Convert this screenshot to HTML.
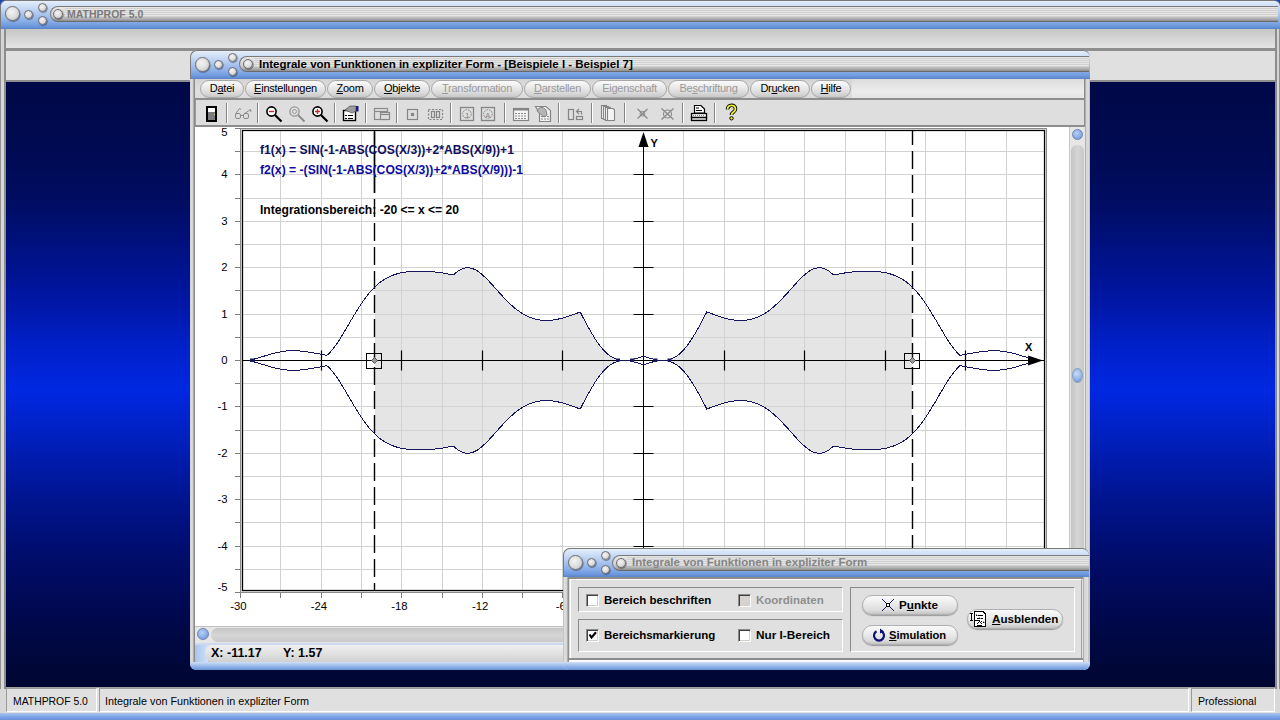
<!DOCTYPE html>
<html><head><meta charset="utf-8">
<style>
*{margin:0;padding:0;box-sizing:border-box}
html,body{width:1280px;height:720px;overflow:hidden;background:#e0e0e0;font-family:"Liberation Sans",sans-serif;font-size:12px;color:#000}
.a{position:absolute}
.tb{position:absolute;border-top:1px solid #7a7a7a;border-left:1px solid #7a7a7a;background:linear-gradient(#e6eefa 0%,#d6e4f8 12%,#b4ccf0 40%,#8cb0e8 70%,#6c98de 90%,#5a82c6 100%)}
.circ{position:absolute;border-radius:50%;background:radial-gradient(circle at 42% 38%,#f4f4f4 0%,#e0e0e0 45%,#cfcfcf 75%,#b8b8b8 100%);border:1px solid #6e6e6e;box-shadow:0.6px 0.8px 0.8px rgba(30,30,50,.55)}
.pill{position:absolute;border-radius:8px 0 0 8px;background:linear-gradient(#e8e8e8 0,#dedede 25%,#d4d4d4 55%,#b8b8b8 80%,#8e8e8e 100%);border:1px solid #7a7a7a;border-bottom-color:#6a6a6a}
.pill:after{content:"";position:absolute;left:14px;right:0;top:1px;bottom:4px;background:repeating-linear-gradient(#d0d0d0 0,#d0d0d0 1px,#e6e6e6 1px,#e6e6e6 2px)}
.mbtn{position:absolute;height:18px;border-radius:9px;border:1px solid #a8a8a8;background:linear-gradient(#fafafa,#ececec 35%,#dcdcdc 70%,#c8c8c8);font-size:11px;letter-spacing:-0.25px;line-height:15px;text-align:center;color:#000}
.mbtn.dis{color:#9a9a9a}
u{text-decoration:underline;text-underline-offset:1px}
.btn{border-radius:10px;border:1px solid #b0b0b0;background:linear-gradient(#fafafa,#ececec 40%,#dcdcdc 80%,#c4c4c4);box-shadow:0 1px 1px #9a9a9a}
</style></head>
<body>
<!-- main background -->
<div class="a" style="left:0;top:0;width:1280px;height:720px;background:#d8d8d8"></div>
<!-- blue desktop area -->
<div class="a" style="left:6px;top:82px;width:1269px;height:605px;background:linear-gradient(#000848 0.0%,#000a4e 8.1%,#000c60 19.5%,#0016a4 36.0%,#0020c8 43.5%,#0028e2 50.9%,#001fbc 59.2%,#00148e 69.1%,#000c68 79.0%,#000846 90.7%,#000630 100.0%)"></div>

<!-- main title bar -->
<div class="a" style="left:0;top:0;width:8px;height:8px;background:#1848b0"></div><div class="a" style="left:1272px;top:0;width:8px;height:8px;background:#1848b0"></div>
<div class="tb" style="left:0;top:0;width:1280px;height:29px;border-radius:6px 6px 0 0"></div>
<div class="circ" style="left:5px;top:6px;width:15px;height:15px"></div>
<div class="circ" style="left:24px;top:10px;width:9px;height:9px"></div>
<div class="circ" style="left:38px;top:3px;width:9px;height:9px"></div>
<div class="circ" style="left:38px;top:16px;width:9px;height:9px"></div>
<div class="pill" style="left:50px;top:6px;width:1228px;height:16px;border-radius:8px 0 0 8px;border-right:none"></div>
<div class="circ" style="left:53px;top:9px;width:10px;height:10px"></div>
<div class="a" style="left:67px;top:7px;font-weight:bold;font-size:10.5px;color:#7a7a7a;line-height:14px">MATHPROF 5.0</div>

<!-- main toolbars -->
<div class="a" style="left:0;top:29px;width:1280px;height:53px;background:#d4d4d4"></div>
<div class="a" style="left:0;top:29px;width:1px;height:660px;background:#909090"></div>
<div class="a" style="left:4px;top:29px;width:2px;height:660px;background:#8c8c8c"></div>
<div class="a" style="left:6px;top:29px;width:1269px;height:20px;background:linear-gradient(#c6c6c6,#e6e6e6)"></div>
<div class="a" style="left:6px;top:48px;width:1269px;height:3px;background:#8e8e8e"></div>
<div class="a" style="left:6px;top:51px;width:1269px;height:30px;background:#e0e0e0"></div>
<div class="a" style="left:6px;top:80px;width:1269px;height:2px;background:#8e8e8e"></div>
<div class="a" style="left:1275px;top:29px;width:2px;height:660px;background:#8c8c8c"></div>
<div class="a" style="left:1279px;top:29px;width:1px;height:660px;background:#909090"></div>

<!-- status bar -->
<div class="a" style="left:6px;top:687px;width:1269px;height:26px;background:#e0e0e0;border-top:1px solid #a0a0a0"></div>
<div class="a" style="left:0;top:713px;width:1280px;height:7px;background:linear-gradient(#aac4ec,#7aa2e4 60%,#6690d8)"></div>

<!-- ================= CHILD WINDOW ================= -->
<div class="a" style="left:190px;top:50px;width:900px;height:620px;background:#d6d6d6;border-radius:7px 7px 7px 7px"></div>
<div class="tb" style="left:190px;top:50px;width:900px;height:29px;border-radius:7px 7px 0 0"></div>
<div class="circ" style="left:195px;top:57px;width:15px;height:15px"></div>
<div class="circ" style="left:214px;top:60px;width:9px;height:9px"></div>
<div class="circ" style="left:228px;top:53px;width:9px;height:9px"></div>
<div class="circ" style="left:228px;top:67px;width:9px;height:9px"></div>
<div class="pill" style="left:239px;top:56px;width:850px;height:16px;border-radius:8px 0 0 8px;border-right:none"></div>
<div class="circ" style="left:243px;top:59px;width:10px;height:10px"></div>
<div class="a" style="left:259px;top:57px;font-weight:bold;font-size:11.5px;color:#000;line-height:14px">Integrale von Funktionen in expliziter Form - [Beispiele I - Beispiel 7]</div>
<!-- frame sides -->
<div class="a" style="left:190px;top:79px;width:5px;height:584px;background:linear-gradient(90deg,#c8c8c8 0,#dedede 1px,#d0d0d0 3px,#8a8a8a 4px,#8a8a8a 5px)"></div>
<div class="a" style="left:1084px;top:79px;width:6px;height:584px;background:linear-gradient(90deg,#8c8c8c 0,#8c8c8c 1px,#d4d4d4 2px,#dcdcdc 5px,#a0a0a0 6px)"></div>
<!-- menubar -->
<div class="a" style="left:195px;top:79px;width:889px;height:20px;background:linear-gradient(#dcdcdc,#ececec 60%,#e4e4e4)"></div>
<div class="a" style="left:195px;top:79px;width:657px;height:20px;background:linear-gradient(#d4d4d4,#e0e0e0 60%,#dadada)"></div>
<div class="mbtn" style="left:200px;top:80px;width:44px"><span>D<u>a</u>tei</span></div>
<div class="mbtn" style="left:245px;top:80px;width:81px"><u>E</u>instellungen</div>
<div class="mbtn" style="left:327px;top:80px;width:46px"><u>Z</u>oom</div>
<div class="mbtn" style="left:374px;top:80px;width:56px"><u>O</u>bjekte</div>
<div class="mbtn dis" style="left:431px;top:80px;width:92px"><u>T</u>ransformation</div>
<div class="mbtn dis" style="left:524px;top:80px;width:67px"><u>D</u>arstellen</div>
<div class="mbtn dis" style="left:592px;top:80px;width:75px">Ei<u>g</u>enschaft</div>
<div class="mbtn dis" style="left:668px;top:80px;width:81px">Be<u>s</u>chriftung</div>
<div class="mbtn" style="left:750px;top:80px;width:60px">Dr<u>u</u>cken</div>
<div class="mbtn" style="left:811px;top:80px;width:40px"><u>H</u>ilfe</div>
<!-- toolbar -->
<div class="a" style="left:195px;top:98px;width:889px;height:2px;background:#8e8e8e"></div>
<div class="a" style="left:195px;top:100px;width:889px;height:26px;background:#dedede;border-left:1px solid #9a9a9a"></div>
<div class="a" style="left:195px;top:125px;width:889px;height:2px;background:#8e8e8e"></div>
<svg class="a" style="left:196px;top:100px" width="888" height="26" viewBox="196 100 888 26">
<g stroke="#858585" stroke-width="1"><path d="M226.5 103V123M257.5 103V123M334.5 103V123M365.5 103V123M396.5 103V123M450.5 103V123M504.5 103V123M558.5 103V123M591.5 103V123M624.5 103V123M682.5 103V123M714.5 103V123"/></g>
<g stroke="#fff" stroke-width="1"><path d="M227.5 103V123M258.5 103V123M335.5 103V123M366.5 103V123M397.5 103V123M451.5 103V123M505.5 103V123M559.5 103V123M592.5 103V123M625.5 103V123M683.5 103V123M715.5 103V123"/></g>
<!-- door -->
<rect x="207" y="107" width="9" height="14" fill="#7c7c7c" stroke="#000" stroke-width="2"/>
<rect x="208" y="108" width="7" height="4" fill="#fff"/>
<rect x="214" y="114" width="1" height="1" fill="#e8e060"/>
<!-- glasses -->
<g fill="none" stroke="#8a8a8a" stroke-width="1"><rect x="235.5" y="113.5" width="5" height="5" rx="1.5"/><rect x="243.5" y="113.5" width="5" height="5" rx="1.5"/><path d="M240.5 115.5H243.5M235.5 114L239.5 108.5L241 109.5M244 114L250.5 109.5L251 112"/></g>
<!-- zoom out -->
<circle cx="271.5" cy="111.5" r="4.6" fill="#fff" stroke="#000" stroke-width="1.6"/>
<path d="M269 111.5H274" stroke="#d02030" stroke-width="1.4"/>
<path d="M275 115L281.5 121.5" stroke="#000" stroke-width="2.2"/>
<!-- zoom gray -->
<circle cx="294.5" cy="111.5" r="4.6" fill="none" stroke="#9a9a9a" stroke-width="1.4"/>
<circle cx="294.5" cy="111.5" r="2" fill="none" stroke="#9a9a9a" stroke-width="1"/>
<path d="M298 115L304.5 121.5" stroke="#8a8a8a" stroke-width="1.8"/>
<!-- zoom in -->
<circle cx="317.5" cy="111.5" r="4.6" fill="#fff" stroke="#000" stroke-width="1.6"/>
<path d="M315 111.5H320M317.5 109V114" stroke="#d02030" stroke-width="1.4"/>
<path d="M321 115L327.5 121.5" stroke="#000" stroke-width="2.2"/>
<!-- properties -->
<rect x="343.5" y="110.5" width="12" height="10" fill="#fff" stroke="#000" stroke-width="1.4"/>
<path d="M345 115.5H347M348 115.5H353M345 118.5H347M348 118.5H353" stroke="#000" stroke-width="1"/>
<path d="M345 110L350 106H356V111L352 113Z" fill="#9c9c9c" stroke="#555" stroke-width="0.8"/>
<rect x="356" y="106" width="2.5" height="5.5" fill="#1a1a80"/>
<!-- windows gray -->
<g fill="none" stroke="#8a8a8a" stroke-width="1.2"><rect x="374.5" y="108.5" width="13" height="11"/><path d="M374.5 111.5H387.5"/><rect x="380.5" y="112.5" width="9" height="7" fill="#dedede"/><path d="M380.5 114.5H389.5"/></g>
<!-- square dot -->
<g fill="none" stroke="#858585" stroke-width="1.2"><rect x="407.5" y="109.5" width="10" height="10"/><rect x="411.5" y="113.5" width="2" height="2"/>
<rect x="428.5" y="109.5" width="14" height="10" stroke-dasharray="2,1.5"/><rect x="431.5" y="111.5" width="3" height="6"/><rect x="436.5" y="111.5" width="3" height="6"/></g>
<!-- circle 1 / A -->
<g fill="none" stroke="#858585" stroke-width="1.3"><rect x="460.5" y="107.5" width="13" height="13"/><rect x="481.5" y="107.5" width="13" height="13"/>
<circle cx="467" cy="114" r="4.3" stroke-dasharray="1.6,1" stroke-width="1"/><circle cx="488" cy="114" r="4.3" stroke-dasharray="1.6,1" stroke-width="1"/></g>
<text x="465" y="117.5" font-family="Liberation Sans" font-size="8" fill="#858585">1</text>
<text x="485.3" y="117.5" font-family="Liberation Sans" font-size="7.5" fill="#858585">A</text>
<!-- table -->
<rect x="513.5" y="108.5" width="15" height="12" fill="#f4f4f4" stroke="#858585" stroke-width="1.2"/>
<rect x="513.5" y="108.5" width="15" height="2" fill="#858585"/>
<path d="M515 113.5H527M515 116H527M515 118.5H527" stroke="#8a8a8a" stroke-width="1" stroke-dasharray="2,1"/>
<!-- table hand -->
<path d="M535.5 106.5H546L550.5 110.5V121.5H539.5V113Z" fill="#f0f0f0" stroke="#858585" stroke-width="1.2"/>
<path d="M541 116.5H549M541 119H549" stroke="#8a8a8a" stroke-width="1" stroke-dasharray="2,1"/>
<path d="M537 111C538 107 543 106 546 110L547 115L544 117Z" fill="#b4b4b4" stroke="#858585" stroke-width="1"/>
<!-- columns arrow -->
<g fill="none" stroke="#858585" stroke-width="1.2"><rect x="568.5" y="109.5" width="5" height="10"/><rect x="576.5" y="116.5" width="6" height="3"/><path d="M581.5 114.5V111.5H577M579 109L576.5 111.5L579 114"/></g>
<!-- pages -->
<g fill="#f4f4f4" stroke="#858585" stroke-width="1.1"><rect x="601.5" y="105.5" width="5" height="13"/><rect x="603.5" y="106.5" width="5" height="13"/><rect x="605.5" y="107.5" width="5" height="13"/><path d="M607.5 108.5H613L614.5 110V120.5H607.5Z"/></g>
<!-- X icons -->
<g stroke="#8a8a8a" stroke-width="1.3" fill="none"><path d="M637.5 109L647.5 118.5M647.5 109L637.5 118.5"/><circle cx="642.5" cy="113.7" r="2.4" stroke-width="1"/>
<path d="M661.5 108.5L673.5 119.5M673.5 108.5L661.5 119.5"/><circle cx="667.5" cy="114" r="4" stroke-width="1.1"/></g>
<!-- printer -->
<path d="M694.5 105.5H701L704.5 109V113H694.5Z" fill="#fff" stroke="#000" stroke-width="1.2"/>
<path d="M696 108H699M696 110.5H702" stroke="#000" stroke-width="1"/>
<rect x="691.5" y="113.5" width="15" height="4" fill="#fff" stroke="#000" stroke-width="1.3"/>
<path d="M693 115.5H705" stroke="#777" stroke-width="1" stroke-dasharray="1,1"/>
<rect x="691.5" y="117.5" width="15" height="3" fill="#d8d8d8" stroke="#000" stroke-width="1.3"/>
<!-- help -->
<path d="M727.5 109.5C727.5 104 735.5 104 735.5 109C735.5 112 731.5 112 731.5 115" fill="none" stroke="#000" stroke-width="3.6"/>
<path d="M727.5 109.5C727.5 104 735.5 104 735.5 109C735.5 112 731.5 112 731.5 115" fill="none" stroke="#f0f020" stroke-width="1.8"/>
<circle cx="731.5" cy="118.3" r="1.7" fill="#f0f020" stroke="#000" stroke-width="1"/>
</svg>
<!-- plot white area -->
<div class="a" style="left:195px;top:127px;width:874px;height:500px;background:#fff"></div>
<svg class="a" style="left:196px;top:127px" width="873" height="500" viewBox="196 127 873 500">
<defs><clipPath id="pc"><rect x="243" y="131" width="801" height="459"/></clipPath></defs>
<path d="M374.8 287.0 L375.6 286.2 L376.5 285.4 L377.3 284.7 L378.1 284.0 L378.9 283.3 L379.7 282.7 L380.5 282.1 L381.4 281.5 L382.2 280.9 L383.0 280.3 L383.8 279.8 L384.6 279.3 L385.4 278.8 L386.2 278.3 L387.1 277.9 L387.9 277.4 L388.7 277.0 L389.5 276.6 L390.3 276.3 L391.1 275.9 L391.9 275.6 L392.8 275.3 L393.6 275.0 L394.4 274.7 L395.2 274.4 L396.0 274.1 L396.8 273.9 L397.7 273.7 L398.5 273.5 L399.3 273.2 L400.1 273.1 L400.9 272.9 L401.7 272.7 L402.5 272.5 L403.4 272.4 L404.2 272.3 L405.0 272.1 L405.8 272.0 L406.6 271.9 L407.4 271.8 L408.2 271.7 L409.1 271.6 L409.9 271.5 L410.7 271.5 L411.5 271.4 L412.3 271.3 L413.1 271.3 L414.0 271.3 L414.8 271.2 L415.6 271.2 L416.4 271.2 L417.2 271.1 L418.0 271.1 L418.8 271.1 L419.7 271.1 L420.5 271.1 L421.3 271.1 L422.1 271.1 L422.9 271.2 L423.7 271.2 L424.5 271.2 L425.4 271.2 L426.2 271.3 L427.0 271.3 L427.8 271.4 L428.6 271.4 L429.4 271.5 L430.3 271.5 L431.1 271.6 L431.9 271.7 L432.7 271.7 L433.5 271.8 L434.3 271.9 L435.1 272.0 L436.0 272.1 L436.8 272.2 L437.6 272.3 L438.4 272.4 L439.2 272.5 L440.0 272.6 L440.8 272.7 L441.7 272.9 L442.5 273.0 L443.3 273.1 L444.1 273.3 L444.9 273.4 L445.7 273.5 L446.5 273.7 L447.4 273.8 L448.2 274.0 L449.0 274.1 L449.8 274.3 L450.6 274.5 L451.4 274.6 L452.3 274.8 L453.1 274.9 L453.9 274.8 L454.7 273.9 L455.5 273.2 L456.3 272.5 L457.1 271.8 L458.0 271.2 L458.8 270.6 L459.6 270.1 L460.4 269.6 L461.2 269.2 L462.0 268.9 L462.8 268.5 L463.7 268.3 L464.5 268.1 L465.3 267.9 L466.1 267.8 L466.9 267.7 L467.7 267.7 L468.6 267.7 L469.4 267.8 L470.2 268.0 L471.0 268.1 L471.8 268.3 L472.6 268.6 L473.4 268.9 L474.3 269.3 L475.1 269.7 L475.9 270.1 L476.7 270.6 L477.5 271.1 L478.3 271.6 L479.1 272.2 L480.0 272.8 L480.8 273.5 L481.6 274.1 L482.4 274.8 L483.2 275.5 L484.0 276.3 L484.9 277.1 L485.7 277.9 L486.5 278.7 L487.3 279.5 L488.1 280.3 L488.9 281.2 L489.7 282.1 L490.6 282.9 L491.4 283.8 L492.2 284.7 L493.0 285.6 L493.8 286.6 L494.6 287.5 L495.4 288.4 L496.3 289.3 L497.1 290.2 L497.9 291.1 L498.7 292.0 L499.5 293.0 L500.3 293.9 L501.2 294.8 L502.0 295.6 L502.8 296.5 L503.6 297.4 L504.4 298.3 L505.2 299.1 L506.0 299.9 L506.9 300.8 L507.7 301.6 L508.5 302.4 L509.3 303.2 L510.1 303.9 L510.9 304.7 L511.7 305.4 L512.6 306.2 L513.4 306.9 L514.2 307.6 L515.0 308.2 L515.8 308.9 L516.6 309.5 L517.5 310.1 L518.3 310.7 L519.1 311.3 L519.9 311.9 L520.7 312.4 L521.5 313.0 L522.3 313.5 L523.2 314.0 L524.0 314.4 L524.8 314.9 L525.6 315.3 L526.4 315.7 L527.2 316.1 L528.0 316.5 L528.9 316.9 L529.7 317.2 L530.5 317.5 L531.3 317.8 L532.1 318.1 L532.9 318.4 L533.7 318.7 L534.6 318.9 L535.4 319.1 L536.2 319.3 L537.0 319.5 L537.8 319.7 L538.6 319.8 L539.5 319.9 L540.3 320.1 L541.1 320.2 L541.9 320.2 L542.7 320.3 L543.5 320.4 L544.3 320.4 L545.2 320.4 L546.0 320.5 L546.8 320.5 L547.6 320.4 L548.4 320.4 L549.2 320.4 L550.0 320.3 L550.9 320.2 L551.7 320.2 L552.5 320.1 L553.3 320.0 L554.1 319.9 L554.9 319.7 L555.8 319.6 L556.6 319.4 L557.4 319.3 L558.2 319.1 L559.0 318.9 L559.8 318.7 L560.6 318.5 L561.5 318.3 L562.3 318.1 L563.1 317.9 L563.9 317.7 L564.7 317.4 L565.5 317.2 L566.3 316.9 L567.2 316.7 L568.0 316.4 L568.8 316.1 L569.6 315.8 L570.4 315.6 L571.2 315.3 L572.1 315.0 L572.9 314.7 L573.7 314.4 L574.5 314.1 L575.3 313.8 L576.1 313.5 L576.9 313.2 L577.8 312.8 L578.6 312.5 L579.4 312.2 L580.2 311.9 L581.0 313.5 L581.8 315.0 L582.6 316.6 L583.5 318.2 L584.3 319.7 L585.1 321.3 L585.9 322.8 L586.7 324.3 L587.5 325.8 L588.4 327.3 L589.2 328.8 L590.0 330.2 L590.8 331.7 L591.6 333.1 L592.4 334.4 L593.2 335.8 L594.1 337.1 L594.9 338.4 L595.7 339.7 L596.5 340.9 L597.3 342.1 L598.1 343.3 L598.9 344.4 L599.8 345.5 L600.6 346.5 L601.4 347.6 L602.2 348.5 L603.0 349.5 L603.8 350.4 L604.7 351.2 L605.5 352.0 L606.3 352.8 L607.1 353.6 L607.9 354.3 L608.7 354.9 L609.5 355.5 L610.4 356.1 L611.2 356.6 L612.0 357.1 L612.8 357.6 L613.6 358.0 L614.4 358.4 L615.2 358.8 L616.1 359.1 L616.9 359.4 L617.7 359.6 L618.5 359.8 L619.3 360.0 L619.3 361.0 L618.5 361.2 L617.7 361.4 L616.9 361.6 L616.1 361.9 L615.2 362.2 L614.4 362.6 L613.6 363.0 L612.8 363.4 L612.0 363.9 L611.2 364.4 L610.4 364.9 L609.5 365.5 L608.7 366.1 L607.9 366.7 L607.1 367.4 L606.3 368.2 L605.5 369.0 L604.7 369.8 L603.8 370.6 L603.0 371.5 L602.2 372.5 L601.4 373.4 L600.6 374.5 L599.8 375.5 L598.9 376.6 L598.1 377.7 L597.3 378.9 L596.5 380.1 L595.7 381.3 L594.9 382.6 L594.1 383.9 L593.2 385.2 L592.4 386.6 L591.6 387.9 L590.8 389.3 L590.0 390.8 L589.2 392.2 L588.4 393.7 L587.5 395.2 L586.7 396.7 L585.9 398.2 L585.1 399.7 L584.3 401.3 L583.5 402.8 L582.6 404.4 L581.8 406.0 L581.0 407.5 L580.2 409.1 L579.4 408.8 L578.6 408.5 L577.8 408.2 L576.9 407.8 L576.1 407.5 L575.3 407.2 L574.5 406.9 L573.7 406.6 L572.9 406.3 L572.1 406.0 L571.2 405.7 L570.4 405.4 L569.6 405.2 L568.8 404.9 L568.0 404.6 L567.2 404.3 L566.3 404.1 L565.5 403.8 L564.7 403.6 L563.9 403.3 L563.1 403.1 L562.3 402.9 L561.5 402.7 L560.6 402.5 L559.8 402.3 L559.0 402.1 L558.2 401.9 L557.4 401.7 L556.6 401.6 L555.8 401.4 L554.9 401.3 L554.1 401.1 L553.3 401.0 L552.5 400.9 L551.7 400.8 L550.9 400.8 L550.0 400.7 L549.2 400.6 L548.4 400.6 L547.6 400.6 L546.8 400.5 L546.0 400.5 L545.2 400.6 L544.3 400.6 L543.5 400.6 L542.7 400.7 L541.9 400.8 L541.1 400.8 L540.3 400.9 L539.5 401.1 L538.6 401.2 L537.8 401.3 L537.0 401.5 L536.2 401.7 L535.4 401.9 L534.6 402.1 L533.7 402.3 L532.9 402.6 L532.1 402.9 L531.3 403.2 L530.5 403.5 L529.7 403.8 L528.9 404.1 L528.0 404.5 L527.2 404.9 L526.4 405.3 L525.6 405.7 L524.8 406.1 L524.0 406.6 L523.2 407.0 L522.3 407.5 L521.5 408.0 L520.7 408.6 L519.9 409.1 L519.1 409.7 L518.3 410.3 L517.5 410.9 L516.6 411.5 L515.8 412.1 L515.0 412.8 L514.2 413.4 L513.4 414.1 L512.6 414.8 L511.7 415.6 L510.9 416.3 L510.1 417.1 L509.3 417.8 L508.5 418.6 L507.7 419.4 L506.9 420.2 L506.0 421.1 L505.2 421.9 L504.4 422.7 L503.6 423.6 L502.8 424.5 L502.0 425.4 L501.2 426.2 L500.3 427.1 L499.5 428.0 L498.7 429.0 L497.9 429.9 L497.1 430.8 L496.3 431.7 L495.4 432.6 L494.6 433.5 L493.8 434.4 L493.0 435.4 L492.2 436.3 L491.4 437.2 L490.6 438.1 L489.7 438.9 L488.9 439.8 L488.1 440.7 L487.3 441.5 L486.5 442.3 L485.7 443.1 L484.9 443.9 L484.0 444.7 L483.2 445.5 L482.4 446.2 L481.6 446.9 L480.8 447.5 L480.0 448.2 L479.1 448.8 L478.3 449.4 L477.5 449.9 L476.7 450.4 L475.9 450.9 L475.1 451.3 L474.3 451.7 L473.4 452.1 L472.6 452.4 L471.8 452.7 L471.0 452.9 L470.2 453.0 L469.4 453.2 L468.6 453.3 L467.7 453.3 L466.9 453.3 L466.1 453.2 L465.3 453.1 L464.5 452.9 L463.7 452.7 L462.8 452.5 L462.0 452.1 L461.2 451.8 L460.4 451.4 L459.6 450.9 L458.8 450.4 L458.0 449.8 L457.1 449.2 L456.3 448.5 L455.5 447.8 L454.7 447.1 L453.9 446.2 L453.1 446.1 L452.3 446.2 L451.4 446.4 L450.6 446.5 L449.8 446.7 L449.0 446.9 L448.2 447.0 L447.4 447.2 L446.5 447.3 L445.7 447.5 L444.9 447.6 L444.1 447.7 L443.3 447.9 L442.5 448.0 L441.7 448.1 L440.8 448.3 L440.0 448.4 L439.2 448.5 L438.4 448.6 L437.6 448.7 L436.8 448.8 L436.0 448.9 L435.1 449.0 L434.3 449.1 L433.5 449.2 L432.7 449.3 L431.9 449.3 L431.1 449.4 L430.3 449.5 L429.4 449.5 L428.6 449.6 L427.8 449.6 L427.0 449.7 L426.2 449.7 L425.4 449.8 L424.5 449.8 L423.7 449.8 L422.9 449.8 L422.1 449.9 L421.3 449.9 L420.5 449.9 L419.7 449.9 L418.8 449.9 L418.0 449.9 L417.2 449.9 L416.4 449.8 L415.6 449.8 L414.8 449.8 L414.0 449.7 L413.1 449.7 L412.3 449.7 L411.5 449.6 L410.7 449.5 L409.9 449.5 L409.1 449.4 L408.2 449.3 L407.4 449.2 L406.6 449.1 L405.8 449.0 L405.0 448.9 L404.2 448.7 L403.4 448.6 L402.5 448.5 L401.7 448.3 L400.9 448.1 L400.1 447.9 L399.3 447.8 L398.5 447.5 L397.7 447.3 L396.8 447.1 L396.0 446.9 L395.2 446.6 L394.4 446.3 L393.6 446.0 L392.8 445.7 L391.9 445.4 L391.1 445.1 L390.3 444.7 L389.5 444.4 L388.7 444.0 L387.9 443.6 L387.1 443.1 L386.2 442.7 L385.4 442.2 L384.6 441.7 L383.8 441.2 L383.0 440.7 L382.2 440.1 L381.4 439.5 L380.5 438.9 L379.7 438.3 L378.9 437.7 L378.1 437.0 L377.3 436.3 L376.5 435.6 L375.6 434.8 L374.8 434.0Z M667.7 360.0 L668.5 359.8 L669.3 359.6 L670.1 359.4 L670.9 359.1 L671.8 358.8 L672.6 358.4 L673.4 358.0 L674.2 357.6 L675.0 357.1 L675.8 356.6 L676.6 356.1 L677.5 355.5 L678.3 354.9 L679.1 354.3 L679.9 353.6 L680.7 352.8 L681.5 352.0 L682.3 351.2 L683.2 350.4 L684.0 349.5 L684.8 348.5 L685.6 347.6 L686.4 346.5 L687.2 345.5 L688.1 344.4 L688.9 343.3 L689.7 342.1 L690.5 340.9 L691.3 339.7 L692.1 338.4 L692.9 337.1 L693.8 335.8 L694.6 334.4 L695.4 333.1 L696.2 331.7 L697.0 330.2 L697.8 328.8 L698.6 327.3 L699.5 325.8 L700.3 324.3 L701.1 322.8 L701.9 321.3 L702.7 319.7 L703.5 318.2 L704.4 316.6 L705.2 315.0 L706.0 313.5 L706.8 311.9 L707.6 312.2 L708.4 312.5 L709.2 312.8 L710.1 313.2 L710.9 313.5 L711.7 313.8 L712.5 314.1 L713.3 314.4 L714.1 314.7 L714.9 315.0 L715.8 315.3 L716.6 315.6 L717.4 315.8 L718.2 316.1 L719.0 316.4 L719.8 316.7 L720.7 316.9 L721.5 317.2 L722.3 317.4 L723.1 317.7 L723.9 317.9 L724.7 318.1 L725.5 318.3 L726.4 318.5 L727.2 318.7 L728.0 318.9 L728.8 319.1 L729.6 319.3 L730.4 319.4 L731.2 319.6 L732.1 319.7 L732.9 319.9 L733.7 320.0 L734.5 320.1 L735.3 320.2 L736.1 320.2 L737.0 320.3 L737.8 320.4 L738.6 320.4 L739.4 320.4 L740.2 320.5 L741.0 320.5 L741.8 320.4 L742.7 320.4 L743.5 320.4 L744.3 320.3 L745.1 320.2 L745.9 320.2 L746.7 320.1 L747.5 319.9 L748.4 319.8 L749.2 319.7 L750.0 319.5 L750.8 319.3 L751.6 319.1 L752.4 318.9 L753.3 318.7 L754.1 318.4 L754.9 318.1 L755.7 317.8 L756.5 317.5 L757.3 317.2 L758.1 316.9 L759.0 316.5 L759.8 316.1 L760.6 315.7 L761.4 315.3 L762.2 314.9 L763.0 314.4 L763.8 314.0 L764.7 313.5 L765.5 313.0 L766.3 312.4 L767.1 311.9 L767.9 311.3 L768.7 310.7 L769.5 310.1 L770.4 309.5 L771.2 308.9 L772.0 308.2 L772.8 307.6 L773.6 306.9 L774.4 306.2 L775.3 305.4 L776.1 304.7 L776.9 303.9 L777.7 303.2 L778.5 302.4 L779.3 301.6 L780.1 300.8 L781.0 299.9 L781.8 299.1 L782.6 298.3 L783.4 297.4 L784.2 296.5 L785.0 295.6 L785.8 294.8 L786.7 293.9 L787.5 293.0 L788.3 292.0 L789.1 291.1 L789.9 290.2 L790.7 289.3 L791.6 288.4 L792.4 287.5 L793.2 286.6 L794.0 285.6 L794.8 284.7 L795.6 283.8 L796.4 282.9 L797.3 282.1 L798.1 281.2 L798.9 280.3 L799.7 279.5 L800.5 278.7 L801.3 277.9 L802.1 277.1 L803.0 276.3 L803.8 275.5 L804.6 274.8 L805.4 274.1 L806.2 273.5 L807.0 272.8 L807.9 272.2 L808.7 271.6 L809.5 271.1 L810.3 270.6 L811.1 270.1 L811.9 269.7 L812.7 269.3 L813.6 268.9 L814.4 268.6 L815.2 268.3 L816.0 268.1 L816.8 268.0 L817.6 267.8 L818.4 267.7 L819.3 267.7 L820.1 267.7 L820.9 267.8 L821.7 267.9 L822.5 268.1 L823.3 268.3 L824.2 268.5 L825.0 268.9 L825.8 269.2 L826.6 269.6 L827.4 270.1 L828.2 270.6 L829.0 271.2 L829.9 271.8 L830.7 272.5 L831.5 273.2 L832.3 273.9 L833.1 274.8 L833.9 274.9 L834.7 274.8 L835.6 274.6 L836.4 274.5 L837.2 274.3 L838.0 274.1 L838.8 274.0 L839.6 273.8 L840.5 273.7 L841.3 273.5 L842.1 273.4 L842.9 273.3 L843.7 273.1 L844.5 273.0 L845.3 272.9 L846.2 272.7 L847.0 272.6 L847.8 272.5 L848.6 272.4 L849.4 272.3 L850.2 272.2 L851.0 272.1 L851.9 272.0 L852.7 271.9 L853.5 271.8 L854.3 271.7 L855.1 271.7 L855.9 271.6 L856.7 271.5 L857.6 271.5 L858.4 271.4 L859.2 271.4 L860.0 271.3 L860.8 271.3 L861.6 271.2 L862.5 271.2 L863.3 271.2 L864.1 271.2 L864.9 271.1 L865.7 271.1 L866.5 271.1 L867.3 271.1 L868.2 271.1 L869.0 271.1 L869.8 271.1 L870.6 271.2 L871.4 271.2 L872.2 271.2 L873.0 271.3 L873.9 271.3 L874.7 271.3 L875.5 271.4 L876.3 271.5 L877.1 271.5 L877.9 271.6 L878.8 271.7 L879.6 271.8 L880.4 271.9 L881.2 272.0 L882.0 272.1 L882.8 272.3 L883.6 272.4 L884.5 272.5 L885.3 272.7 L886.1 272.9 L886.9 273.1 L887.7 273.2 L888.5 273.5 L889.3 273.7 L890.2 273.9 L891.0 274.1 L891.8 274.4 L892.6 274.7 L893.4 275.0 L894.2 275.3 L895.1 275.6 L895.9 275.9 L896.7 276.3 L897.5 276.6 L898.3 277.0 L899.1 277.4 L899.9 277.9 L900.8 278.3 L901.6 278.8 L902.4 279.3 L903.2 279.8 L904.0 280.3 L904.8 280.9 L905.6 281.5 L906.5 282.1 L907.3 282.7 L908.1 283.3 L908.9 284.0 L909.7 284.7 L910.5 285.4 L911.4 286.2 L912.2 287.0 L912.2 434.0 L911.4 434.8 L910.5 435.6 L909.7 436.3 L908.9 437.0 L908.1 437.7 L907.3 438.3 L906.5 438.9 L905.6 439.5 L904.8 440.1 L904.0 440.7 L903.2 441.2 L902.4 441.7 L901.6 442.2 L900.8 442.7 L899.9 443.1 L899.1 443.6 L898.3 444.0 L897.5 444.4 L896.7 444.7 L895.9 445.1 L895.1 445.4 L894.2 445.7 L893.4 446.0 L892.6 446.3 L891.8 446.6 L891.0 446.9 L890.2 447.1 L889.3 447.3 L888.5 447.5 L887.7 447.8 L886.9 447.9 L886.1 448.1 L885.3 448.3 L884.5 448.5 L883.6 448.6 L882.8 448.7 L882.0 448.9 L881.2 449.0 L880.4 449.1 L879.6 449.2 L878.8 449.3 L877.9 449.4 L877.1 449.5 L876.3 449.5 L875.5 449.6 L874.7 449.7 L873.9 449.7 L873.0 449.7 L872.2 449.8 L871.4 449.8 L870.6 449.8 L869.8 449.9 L869.0 449.9 L868.2 449.9 L867.3 449.9 L866.5 449.9 L865.7 449.9 L864.9 449.9 L864.1 449.8 L863.3 449.8 L862.5 449.8 L861.6 449.8 L860.8 449.7 L860.0 449.7 L859.2 449.6 L858.4 449.6 L857.6 449.5 L856.7 449.5 L855.9 449.4 L855.1 449.3 L854.3 449.3 L853.5 449.2 L852.7 449.1 L851.9 449.0 L851.0 448.9 L850.2 448.8 L849.4 448.7 L848.6 448.6 L847.8 448.5 L847.0 448.4 L846.2 448.3 L845.3 448.1 L844.5 448.0 L843.7 447.9 L842.9 447.7 L842.1 447.6 L841.3 447.5 L840.5 447.3 L839.6 447.2 L838.8 447.0 L838.0 446.9 L837.2 446.7 L836.4 446.5 L835.6 446.4 L834.7 446.2 L833.9 446.1 L833.1 446.2 L832.3 447.1 L831.5 447.8 L830.7 448.5 L829.9 449.2 L829.0 449.8 L828.2 450.4 L827.4 450.9 L826.6 451.4 L825.8 451.8 L825.0 452.1 L824.2 452.5 L823.3 452.7 L822.5 452.9 L821.7 453.1 L820.9 453.2 L820.1 453.3 L819.3 453.3 L818.4 453.3 L817.6 453.2 L816.8 453.0 L816.0 452.9 L815.2 452.7 L814.4 452.4 L813.6 452.1 L812.7 451.7 L811.9 451.3 L811.1 450.9 L810.3 450.4 L809.5 449.9 L808.7 449.4 L807.9 448.8 L807.0 448.2 L806.2 447.5 L805.4 446.9 L804.6 446.2 L803.8 445.5 L803.0 444.7 L802.1 443.9 L801.3 443.1 L800.5 442.3 L799.7 441.5 L798.9 440.7 L798.1 439.8 L797.3 438.9 L796.4 438.1 L795.6 437.2 L794.8 436.3 L794.0 435.4 L793.2 434.4 L792.4 433.5 L791.6 432.6 L790.7 431.7 L789.9 430.8 L789.1 429.9 L788.3 429.0 L787.5 428.0 L786.7 427.1 L785.8 426.2 L785.0 425.4 L784.2 424.5 L783.4 423.6 L782.6 422.7 L781.8 421.9 L781.0 421.1 L780.1 420.2 L779.3 419.4 L778.5 418.6 L777.7 417.8 L776.9 417.1 L776.1 416.3 L775.3 415.6 L774.4 414.8 L773.6 414.1 L772.8 413.4 L772.0 412.8 L771.2 412.1 L770.4 411.5 L769.5 410.9 L768.7 410.3 L767.9 409.7 L767.1 409.1 L766.3 408.6 L765.5 408.0 L764.7 407.5 L763.8 407.0 L763.0 406.6 L762.2 406.1 L761.4 405.7 L760.6 405.3 L759.8 404.9 L759.0 404.5 L758.1 404.1 L757.3 403.8 L756.5 403.5 L755.7 403.2 L754.9 402.9 L754.1 402.6 L753.3 402.3 L752.4 402.1 L751.6 401.9 L750.8 401.7 L750.0 401.5 L749.2 401.3 L748.4 401.2 L747.5 401.1 L746.7 400.9 L745.9 400.8 L745.1 400.8 L744.3 400.7 L743.5 400.6 L742.7 400.6 L741.8 400.6 L741.0 400.5 L740.2 400.5 L739.4 400.6 L738.6 400.6 L737.8 400.6 L737.0 400.7 L736.1 400.8 L735.3 400.8 L734.5 400.9 L733.7 401.0 L732.9 401.1 L732.1 401.3 L731.2 401.4 L730.4 401.6 L729.6 401.7 L728.8 401.9 L728.0 402.1 L727.2 402.3 L726.4 402.5 L725.5 402.7 L724.7 402.9 L723.9 403.1 L723.1 403.3 L722.3 403.6 L721.5 403.8 L720.7 404.1 L719.8 404.3 L719.0 404.6 L718.2 404.9 L717.4 405.2 L716.6 405.4 L715.8 405.7 L714.9 406.0 L714.1 406.3 L713.3 406.6 L712.5 406.9 L711.7 407.2 L710.9 407.5 L710.1 407.8 L709.2 408.2 L708.4 408.5 L707.6 408.8 L706.8 409.1 L706.0 407.5 L705.2 406.0 L704.4 404.4 L703.5 402.8 L702.7 401.3 L701.9 399.7 L701.1 398.2 L700.3 396.7 L699.5 395.2 L698.6 393.7 L697.8 392.2 L697.0 390.8 L696.2 389.3 L695.4 387.9 L694.6 386.6 L693.8 385.2 L692.9 383.9 L692.1 382.6 L691.3 381.3 L690.5 380.1 L689.7 378.9 L688.9 377.7 L688.1 376.6 L687.2 375.5 L686.4 374.5 L685.6 373.4 L684.8 372.5 L684.0 371.5 L683.2 370.6 L682.3 369.8 L681.5 369.0 L680.7 368.2 L679.9 367.4 L679.1 366.7 L678.3 366.1 L677.5 365.5 L676.6 364.9 L675.8 364.4 L675.0 363.9 L674.2 363.4 L673.4 363.0 L672.6 362.6 L671.8 362.2 L670.9 361.9 L670.1 361.6 L669.3 361.4 L668.5 361.2 L667.7 361.0Z" fill="#e5e5e5"/>
<path d="M280.5 129V591 M321.5 129V591 M361.5 129V591 M401.5 129V591 M442.5 129V591 M482.5 129V591 M522.5 129V591 M562.5 129V591 M603.5 129V591 M683.5 129V591 M724.5 129V591 M764.5 129V591 M804.5 129V591 M845.5 129V591 M885.5 129V591 M925.5 129V591 M965.5 129V591 M1006.5 129V591 M243 569.5H1045 M243 546.5H1045 M243 522.5H1045 M243 499.5H1045 M243 476.5H1045 M243 453.5H1045 M243 430.5H1045 M243 406.5H1045 M243 383.5H1045 M243 337.5H1045 M243 314.5H1045 M243 290.5H1045 M243 267.5H1045 M243 244.5H1045 M243 221.5H1045 M243 198.5H1045 M243 174.5H1045 M243 151.5H1045" stroke="#d2d2d2" stroke-width="1" fill="none"/>
<path d="M235 592.5H240 M235 569.5H240 M235 546.5H240 M235 522.5H240 M235 499.5H240 M235 476.5H240 M235 453.5H240 M235 430.5H240 M235 406.5H240 M235 383.5H240 M235 360.5H240 M235 337.5H240 M235 314.5H240 M235 290.5H240 M235 267.5H240 M235 244.5H240 M235 221.5H240 M235 198.5H240 M235 174.5H240 M235 151.5H240 M235 128.5H240 M240.5 593V598 M280.5 593V598 M321.5 593V598 M361.5 593V598 M401.5 593V598 M442.5 593V598 M482.5 593V598 M522.5 593V598 M562.5 593V598 M603.5 593V598 M643.5 593V598 M683.5 593V598 M724.5 593V598 M764.5 593V598 M804.5 593V598 M845.5 593V598 M885.5 593V598 M925.5 593V598 M965.5 593V598 M1006.5 593V598 M1046.5 593V598" stroke="#7a7a7a" stroke-width="1" fill="none"/>
<rect x="240.5" y="128.5" width="806" height="464" fill="none" stroke="#8a8a8a" stroke-width="1"/>
<rect x="241.5" y="129.5" width="804" height="462" fill="none" stroke="#e4e4e4" stroke-width="1"/>
<rect x="242.5" y="130.5" width="802" height="460" fill="none" stroke="#000" stroke-width="1.25"/>
<path d="M243 360.5H1044 M643.5 591V145" stroke="#000" stroke-width="1.1" fill="none" shape-rendering="crispEdges"/>
<path d="M1043 360.5L1028 355.5V365.5Z" fill="#000"/>
<path d="M643.5 132L638.5 147H648.5Z" fill="#000"/>
<path d="M633.5 546.5H653.5 M633.5 499.5H653.5 M633.5 453.5H653.5 M633.5 406.5H653.5 M633.5 314.5H653.5 M633.5 267.5H653.5 M633.5 221.5H653.5 M633.5 174.5H653.5 M321.5 350.5V370.5 M401.5 350.5V370.5 M482.5 350.5V370.5 M562.5 350.5V370.5 M724.5 350.5V370.5 M804.5 350.5V370.5 M885.5 350.5V370.5 M965.5 350.5V370.5" stroke="#000" stroke-width="1.2" fill="none"/>
<path d="M374.5 127V591" stroke="#000" stroke-width="1.4" stroke-dasharray="18,6" clip-path="url(#pc)"/>
<path d="M912.5 127V591" stroke="#000" stroke-width="1.4" stroke-dasharray="18,6" clip-path="url(#pc)"/>
<path d="M374.5 132V193" stroke="#000" stroke-width="1.4"/>
<path d="M248.6 360.2 L249.7 360.1 L250.8 359.9 L251.9 359.6 L253.0 359.4 L254.1 359.1 L255.2 358.8 L256.4 358.5 L257.5 358.2 L258.6 357.9 L259.7 357.5 L260.8 357.2 L261.9 356.8 L263.1 356.5 L264.2 356.1 L265.3 355.8 L266.4 355.4 L267.5 355.1 L268.6 354.7 L269.7 354.4 L270.9 354.1 L272.0 353.8 L273.1 353.5 L274.2 353.2 L275.3 352.9 L276.4 352.6 L277.5 352.4 L278.7 352.2 L279.8 352.0 L280.9 351.8 L282.0 351.6 L283.1 351.4 L284.2 351.3 L285.4 351.1 L286.5 351.0 L287.6 350.9 L288.7 350.9 L289.8 350.8 L290.9 350.8 L292.0 350.7 L293.2 350.7 L294.3 350.7 L295.4 350.8 L296.5 350.8 L297.6 350.9 L298.7 350.9 L299.8 351.0 L301.0 351.1 L302.1 351.2 L303.2 351.3 L304.3 351.5 L305.4 351.6 L306.5 351.8 L307.7 351.9 L308.8 352.1 L309.9 352.3 L311.0 352.4 L312.1 352.6 L313.2 352.8 L314.3 353.0 L315.5 353.2 L316.6 353.4 L317.7 353.6 L318.8 353.8 L319.9 354.0 L321.0 354.2 L322.1 354.5 L323.3 354.7 L324.4 354.9 L325.5 355.1 L326.6 355.3 L327.7 354.7 L328.8 353.6 L330.0 352.4 L331.1 351.2 L332.2 349.9 L333.3 348.5 L334.4 347.0 L335.5 345.5 L336.6 343.9 L337.8 342.3 L338.9 340.6 L340.0 338.8 L341.1 337.1 L342.2 335.3 L343.3 333.4 L344.4 331.6 L345.6 329.7 L346.7 327.8 L347.8 325.9 L348.9 324.0 L350.0 322.1 L351.1 320.2 L352.3 318.3 L353.4 316.4 L354.5 314.5 L355.6 312.7 L356.7 310.9 L357.8 309.1 L358.9 307.3 L360.1 305.6 L361.2 303.9 L362.3 302.3 L363.4 300.7 L364.5 299.1 L365.6 297.6 L366.7 296.1 L367.9 294.7 L369.0 293.3 L370.1 292.0 L371.2 290.8 L372.3 289.5 L373.4 288.4 L374.6 287.2 L375.7 286.2 L376.8 285.2 L377.9 284.2 L379.0 283.2 L380.1 282.4 L381.2 281.5 L382.4 280.7 L383.5 280.0 L384.6 279.3 L385.7 278.6 L386.8 278.0 L387.9 277.4 L389.0 276.9 L390.2 276.3 L391.3 275.9 L392.4 275.4 L393.5 275.0 L394.6 274.6 L395.7 274.2 L396.9 273.9 L398.0 273.6 L399.1 273.3 L400.2 273.0 L401.3 272.8 L402.4 272.6 L403.5 272.4 L404.7 272.2 L405.8 272.0 L406.9 271.9 L408.0 271.7 L409.1 271.6 L410.2 271.5 L411.3 271.4 L412.5 271.3 L413.6 271.3 L414.7 271.2 L415.8 271.2 L416.9 271.1 L418.0 271.1 L419.1 271.1 L420.3 271.1 L421.4 271.1 L422.5 271.1 L423.6 271.2 L424.7 271.2 L425.8 271.3 L427.0 271.3 L428.1 271.4 L429.2 271.5 L430.3 271.5 L431.4 271.6 L432.5 271.7 L433.6 271.8 L434.8 272.0 L435.9 272.1 L437.0 272.2 L438.1 272.4 L439.2 272.5 L440.3 272.7 L441.4 272.8 L442.6 273.0 L443.7 273.2 L444.8 273.4 L445.9 273.6 L447.0 273.8 L448.1 274.0 L449.3 274.2 L450.4 274.4 L451.5 274.6 L452.6 274.9 L453.7 274.9 L454.8 273.8 L455.9 272.8 L457.1 271.9 L458.2 271.0 L459.3 270.3 L460.4 269.6 L461.5 269.1 L462.6 268.6 L463.7 268.2 L464.9 268.0 L466.0 267.8 L467.1 267.7 L468.2 267.7 L469.3 267.8 L470.4 268.0 L471.6 268.3 L472.7 268.6 L473.8 269.1 L474.9 269.6 L476.0 270.2 L477.1 270.8 L478.2 271.6 L479.4 272.4 L480.5 273.2 L481.6 274.1 L482.7 275.1 L483.8 276.1 L484.9 277.1 L486.0 278.2 L487.2 279.4 L488.3 280.5 L489.4 281.7 L490.5 282.9 L491.6 284.1 L492.7 285.3 L493.9 286.6 L495.0 287.8 L496.1 289.1 L497.2 290.4 L498.3 291.6 L499.4 292.8 L500.5 294.1 L501.7 295.3 L502.8 296.5 L503.9 297.7 L505.0 298.9 L506.1 300.0 L507.2 301.2 L508.3 302.3 L509.5 303.3 L510.6 304.4 L511.7 305.4 L512.8 306.4 L513.9 307.3 L515.0 308.3 L516.2 309.2 L517.3 310.0 L518.4 310.8 L519.5 311.6 L520.6 312.4 L521.7 313.1 L522.8 313.8 L524.0 314.4 L525.1 315.0 L526.2 315.6 L527.3 316.2 L528.4 316.7 L529.5 317.2 L530.6 317.6 L531.8 318.0 L532.9 318.4 L534.0 318.7 L535.1 319.0 L536.2 319.3 L537.3 319.6 L538.5 319.8 L539.6 320.0 L540.7 320.1 L541.8 320.2 L542.9 320.3 L544.0 320.4 L545.1 320.4 L546.3 320.5 L547.4 320.4 L548.5 320.4 L549.6 320.3 L550.7 320.3 L551.8 320.1 L552.9 320.0 L554.1 319.9 L555.2 319.7 L556.3 319.5 L557.4 319.3 L558.5 319.0 L559.6 318.8 L560.8 318.5 L561.9 318.2 L563.0 317.9 L564.1 317.6 L565.2 317.3 L566.3 316.9 L567.4 316.6 L568.6 316.2 L569.7 315.8 L570.8 315.4 L571.9 315.0 L573.0 314.6 L574.1 314.2 L575.2 313.8 L576.4 313.4 L577.5 313.0 L578.6 312.5 L579.7 312.1 L580.8 313.1 L581.9 315.2 L583.0 317.4 L584.2 319.5 L585.3 321.6 L586.4 323.7 L587.5 325.8 L588.6 327.8 L589.7 329.8 L590.9 331.8 L592.0 333.7 L593.1 335.5 L594.2 337.4 L595.3 339.1 L596.4 340.8 L597.5 342.4 L598.7 344.0 L599.8 345.5 L600.9 346.9 L602.0 348.3 L603.1 349.6 L604.2 350.8 L605.3 351.9 L606.5 353.0 L607.6 354.0 L608.7 354.9 L609.8 355.7 L610.9 356.5 L612.0 357.2 L613.2 357.8 L614.3 358.3 L615.4 358.8 L616.5 359.2 L617.6 359.6 L618.7 359.9 L619.8 360.1 L621.0 360.3 L622.1 360.4 L623.2 360.5 L624.3 360.5 L625.4 360.5 L626.5 360.4 L627.6 360.3 L628.8 360.2 L629.9 360.0 L631.0 359.8 L632.1 359.6 L633.2 359.3 L634.3 359.0 L635.5 358.7 L636.6 358.4 L637.7 358.1 L638.8 357.8 L639.9 357.4 L641.0 357.1 L642.1 356.7 L643.3 356.4 L644.4 356.6 L645.5 356.9 L646.6 357.3 L647.7 357.6 L648.8 358.0 L649.9 358.3 L651.1 358.6 L652.2 358.9 L653.3 359.2 L654.4 359.5 L655.5 359.7 L656.6 359.9 L657.8 360.1 L658.9 360.3 L660.0 360.4 L661.1 360.5 L662.2 360.5 L663.3 360.5 L664.4 360.4 L665.6 360.3 L666.7 360.2 L667.8 360.0 L668.9 359.7 L670.0 359.4 L671.1 359.0 L672.2 358.6 L673.4 358.0 L674.5 357.5 L675.6 356.8 L676.7 356.1 L677.8 355.3 L678.9 354.4 L680.1 353.4 L681.2 352.4 L682.3 351.3 L683.4 350.1 L684.5 348.9 L685.6 347.5 L686.7 346.1 L687.9 344.7 L689.0 343.1 L690.1 341.5 L691.2 339.9 L692.3 338.1 L693.4 336.3 L694.5 334.5 L695.7 332.6 L696.8 330.7 L697.9 328.7 L699.0 326.7 L700.1 324.6 L701.2 322.5 L702.4 320.4 L703.5 318.3 L704.6 316.2 L705.7 314.0 L706.8 311.9 L707.9 312.3 L709.0 312.8 L710.2 313.2 L711.3 313.6 L712.4 314.0 L713.5 314.4 L714.6 314.9 L715.7 315.3 L716.8 315.6 L718.0 316.0 L719.1 316.4 L720.2 316.8 L721.3 317.1 L722.4 317.5 L723.5 317.8 L724.7 318.1 L725.8 318.4 L726.9 318.7 L728.0 318.9 L729.1 319.2 L730.2 319.4 L731.3 319.6 L732.5 319.8 L733.6 320.0 L734.7 320.1 L735.8 320.2 L736.9 320.3 L738.0 320.4 L739.1 320.4 L740.3 320.5 L741.4 320.5 L742.5 320.4 L743.6 320.4 L744.7 320.3 L745.8 320.2 L747.0 320.0 L748.1 319.9 L749.2 319.7 L750.3 319.4 L751.4 319.2 L752.5 318.9 L753.6 318.5 L754.8 318.2 L755.9 317.8 L757.0 317.4 L758.1 316.9 L759.2 316.4 L760.3 315.9 L761.4 315.3 L762.6 314.7 L763.7 314.1 L764.8 313.4 L765.9 312.7 L767.0 312.0 L768.1 311.2 L769.2 310.4 L770.4 309.5 L771.5 308.7 L772.6 307.7 L773.7 306.8 L774.8 305.8 L775.9 304.8 L777.1 303.8 L778.2 302.7 L779.3 301.6 L780.4 300.5 L781.5 299.4 L782.6 298.2 L783.7 297.0 L784.9 295.8 L786.0 294.6 L787.1 293.4 L788.2 292.1 L789.3 290.9 L790.4 289.6 L791.5 288.4 L792.7 287.1 L793.8 285.9 L794.9 284.6 L796.0 283.4 L797.1 282.2 L798.2 281.0 L799.4 279.9 L800.5 278.7 L801.6 277.6 L802.7 276.5 L803.8 275.5 L804.9 274.5 L806.0 273.6 L807.2 272.7 L808.3 271.9 L809.4 271.1 L810.5 270.5 L811.6 269.8 L812.7 269.3 L813.8 268.8 L815.0 268.4 L816.1 268.1 L817.2 267.9 L818.3 267.7 L819.4 267.7 L820.5 267.7 L821.7 267.9 L822.8 268.1 L823.9 268.4 L825.0 268.9 L826.1 269.4 L827.2 270.0 L828.3 270.7 L829.5 271.5 L830.6 272.4 L831.7 273.4 L832.8 274.4 L833.9 275.0 L835.0 274.7 L836.1 274.5 L837.3 274.3 L838.4 274.1 L839.5 273.9 L840.6 273.7 L841.7 273.5 L842.8 273.3 L844.0 273.1 L845.1 272.9 L846.2 272.7 L847.3 272.6 L848.4 272.4 L849.5 272.3 L850.6 272.1 L851.8 272.0 L852.9 271.9 L854.0 271.8 L855.1 271.7 L856.2 271.6 L857.3 271.5 L858.4 271.4 L859.6 271.3 L860.7 271.3 L861.8 271.2 L862.9 271.2 L864.0 271.2 L865.1 271.1 L866.3 271.1 L867.4 271.1 L868.5 271.1 L869.6 271.1 L870.7 271.2 L871.8 271.2 L872.9 271.3 L874.1 271.3 L875.2 271.4 L876.3 271.5 L877.4 271.6 L878.5 271.7 L879.6 271.8 L880.7 271.9 L881.9 272.1 L883.0 272.3 L884.1 272.5 L885.2 272.7 L886.3 272.9 L887.4 273.2 L888.6 273.5 L889.7 273.8 L890.8 274.1 L891.9 274.4 L893.0 274.8 L894.1 275.2 L895.2 275.7 L896.4 276.1 L897.5 276.6 L898.6 277.2 L899.7 277.7 L900.8 278.3 L901.9 279.0 L903.0 279.7 L904.2 280.4 L905.3 281.2 L906.4 282.0 L907.5 282.9 L908.6 283.8 L909.7 284.7 L910.9 285.7 L912.0 286.8 L913.1 287.9 L914.2 289.0 L915.3 290.2 L916.4 291.5 L917.5 292.8 L918.7 294.1 L919.8 295.5 L920.9 297.0 L922.0 298.5 L923.1 300.0 L924.2 301.6 L925.3 303.2 L926.5 304.9 L927.6 306.6 L928.7 308.3 L929.8 310.1 L930.9 311.9 L932.0 313.7 L933.1 315.6 L934.3 317.4 L935.4 319.3 L936.5 321.2 L937.6 323.1 L938.7 325.0 L939.8 327.0 L941.0 328.9 L942.1 330.7 L943.2 332.6 L944.3 334.5 L945.4 336.3 L946.5 338.1 L947.6 339.8 L948.8 341.5 L949.9 343.2 L951.0 344.8 L952.1 346.3 L953.2 347.8 L954.3 349.3 L955.4 350.6 L956.6 351.9 L957.7 353.1 L958.8 354.2 L959.9 355.2 L961.0 355.2 L962.1 355.0 L963.3 354.8 L964.4 354.5 L965.5 354.3 L966.6 354.1 L967.7 353.9 L968.8 353.7 L969.9 353.5 L971.1 353.3 L972.2 353.1 L973.3 352.9 L974.4 352.7 L975.5 352.5 L976.6 352.3 L977.7 352.2 L978.9 352.0 L980.0 351.8 L981.1 351.7 L982.2 351.5 L983.3 351.4 L984.4 351.3 L985.6 351.1 L986.7 351.0 L987.8 351.0 L988.9 350.9 L990.0 350.8 L991.1 350.8 L992.2 350.7 L993.4 350.7 L994.5 350.7 L995.6 350.7 L996.7 350.8 L997.8 350.8 L998.9 350.9 L1000.0 351.0 L1001.2 351.1 L1002.3 351.2 L1003.4 351.3 L1004.5 351.5 L1005.6 351.7 L1006.7 351.9 L1007.9 352.1 L1009.0 352.3 L1010.1 352.5 L1011.2 352.8 L1012.3 353.1 L1013.4 353.3 L1014.5 353.6 L1015.7 353.9 L1016.8 354.3 L1017.9 354.6 L1019.0 354.9 L1020.1 355.3 L1021.2 355.6 L1022.3 356.0 L1023.5 356.3 L1024.6 356.7 L1025.7 357.0 L1026.8 357.4 L1027.9 357.7 L1029.0 358.1 M248.6 360.8 L249.7 360.9 L250.8 361.1 L251.9 361.4 L253.0 361.6 L254.1 361.9 L255.2 362.2 L256.4 362.5 L257.5 362.8 L258.6 363.1 L259.7 363.5 L260.8 363.8 L261.9 364.2 L263.1 364.5 L264.2 364.9 L265.3 365.2 L266.4 365.6 L267.5 365.9 L268.6 366.3 L269.7 366.6 L270.9 366.9 L272.0 367.2 L273.1 367.5 L274.2 367.8 L275.3 368.1 L276.4 368.4 L277.5 368.6 L278.7 368.8 L279.8 369.0 L280.9 369.2 L282.0 369.4 L283.1 369.6 L284.2 369.7 L285.4 369.9 L286.5 370.0 L287.6 370.1 L288.7 370.1 L289.8 370.2 L290.9 370.2 L292.0 370.3 L293.2 370.3 L294.3 370.3 L295.4 370.2 L296.5 370.2 L297.6 370.1 L298.7 370.1 L299.8 370.0 L301.0 369.9 L302.1 369.8 L303.2 369.7 L304.3 369.5 L305.4 369.4 L306.5 369.2 L307.7 369.1 L308.8 368.9 L309.9 368.7 L311.0 368.6 L312.1 368.4 L313.2 368.2 L314.3 368.0 L315.5 367.8 L316.6 367.6 L317.7 367.4 L318.8 367.2 L319.9 367.0 L321.0 366.8 L322.1 366.5 L323.3 366.3 L324.4 366.1 L325.5 365.9 L326.6 365.7 L327.7 366.3 L328.8 367.4 L330.0 368.6 L331.1 369.8 L332.2 371.1 L333.3 372.5 L334.4 374.0 L335.5 375.5 L336.6 377.1 L337.8 378.7 L338.9 380.4 L340.0 382.2 L341.1 383.9 L342.2 385.7 L343.3 387.6 L344.4 389.4 L345.6 391.3 L346.7 393.2 L347.8 395.1 L348.9 397.0 L350.0 398.9 L351.1 400.8 L352.3 402.7 L353.4 404.6 L354.5 406.5 L355.6 408.3 L356.7 410.1 L357.8 411.9 L358.9 413.7 L360.1 415.4 L361.2 417.1 L362.3 418.7 L363.4 420.3 L364.5 421.9 L365.6 423.4 L366.7 424.9 L367.9 426.3 L369.0 427.7 L370.1 429.0 L371.2 430.2 L372.3 431.5 L373.4 432.6 L374.6 433.8 L375.7 434.8 L376.8 435.8 L377.9 436.8 L379.0 437.8 L380.1 438.6 L381.2 439.5 L382.4 440.3 L383.5 441.0 L384.6 441.7 L385.7 442.4 L386.8 443.0 L387.9 443.6 L389.0 444.1 L390.2 444.7 L391.3 445.1 L392.4 445.6 L393.5 446.0 L394.6 446.4 L395.7 446.8 L396.9 447.1 L398.0 447.4 L399.1 447.7 L400.2 448.0 L401.3 448.2 L402.4 448.4 L403.5 448.6 L404.7 448.8 L405.8 449.0 L406.9 449.1 L408.0 449.3 L409.1 449.4 L410.2 449.5 L411.3 449.6 L412.5 449.7 L413.6 449.7 L414.7 449.8 L415.8 449.8 L416.9 449.9 L418.0 449.9 L419.1 449.9 L420.3 449.9 L421.4 449.9 L422.5 449.9 L423.6 449.8 L424.7 449.8 L425.8 449.7 L427.0 449.7 L428.1 449.6 L429.2 449.5 L430.3 449.5 L431.4 449.4 L432.5 449.3 L433.6 449.2 L434.8 449.0 L435.9 448.9 L437.0 448.8 L438.1 448.6 L439.2 448.5 L440.3 448.3 L441.4 448.2 L442.6 448.0 L443.7 447.8 L444.8 447.6 L445.9 447.4 L447.0 447.2 L448.1 447.0 L449.3 446.8 L450.4 446.6 L451.5 446.4 L452.6 446.1 L453.7 446.1 L454.8 447.2 L455.9 448.2 L457.1 449.1 L458.2 450.0 L459.3 450.7 L460.4 451.4 L461.5 451.9 L462.6 452.4 L463.7 452.8 L464.9 453.0 L466.0 453.2 L467.1 453.3 L468.2 453.3 L469.3 453.2 L470.4 453.0 L471.6 452.7 L472.7 452.4 L473.8 451.9 L474.9 451.4 L476.0 450.8 L477.1 450.2 L478.2 449.4 L479.4 448.6 L480.5 447.8 L481.6 446.9 L482.7 445.9 L483.8 444.9 L484.9 443.9 L486.0 442.8 L487.2 441.6 L488.3 440.5 L489.4 439.3 L490.5 438.1 L491.6 436.9 L492.7 435.7 L493.9 434.4 L495.0 433.2 L496.1 431.9 L497.2 430.6 L498.3 429.4 L499.4 428.2 L500.5 426.9 L501.7 425.7 L502.8 424.5 L503.9 423.3 L505.0 422.1 L506.1 421.0 L507.2 419.8 L508.3 418.7 L509.5 417.7 L510.6 416.6 L511.7 415.6 L512.8 414.6 L513.9 413.7 L515.0 412.7 L516.2 411.8 L517.3 411.0 L518.4 410.2 L519.5 409.4 L520.6 408.6 L521.7 407.9 L522.8 407.2 L524.0 406.6 L525.1 406.0 L526.2 405.4 L527.3 404.8 L528.4 404.3 L529.5 403.8 L530.6 403.4 L531.8 403.0 L532.9 402.6 L534.0 402.3 L535.1 402.0 L536.2 401.7 L537.3 401.4 L538.5 401.2 L539.6 401.0 L540.7 400.9 L541.8 400.8 L542.9 400.7 L544.0 400.6 L545.1 400.6 L546.3 400.5 L547.4 400.6 L548.5 400.6 L549.6 400.7 L550.7 400.7 L551.8 400.9 L552.9 401.0 L554.1 401.1 L555.2 401.3 L556.3 401.5 L557.4 401.7 L558.5 402.0 L559.6 402.2 L560.8 402.5 L561.9 402.8 L563.0 403.1 L564.1 403.4 L565.2 403.7 L566.3 404.1 L567.4 404.4 L568.6 404.8 L569.7 405.2 L570.8 405.6 L571.9 406.0 L573.0 406.4 L574.1 406.8 L575.2 407.2 L576.4 407.6 L577.5 408.0 L578.6 408.5 L579.7 408.9 L580.8 407.9 L581.9 405.8 L583.0 403.6 L584.2 401.5 L585.3 399.4 L586.4 397.3 L587.5 395.2 L588.6 393.2 L589.7 391.2 L590.9 389.2 L592.0 387.3 L593.1 385.5 L594.2 383.6 L595.3 381.9 L596.4 380.2 L597.5 378.6 L598.7 377.0 L599.8 375.5 L600.9 374.1 L602.0 372.7 L603.1 371.4 L604.2 370.2 L605.3 369.1 L606.5 368.0 L607.6 367.0 L608.7 366.1 L609.8 365.3 L610.9 364.5 L612.0 363.8 L613.2 363.2 L614.3 362.7 L615.4 362.2 L616.5 361.8 L617.6 361.4 L618.7 361.1 L619.8 360.9 L621.0 360.7 L622.1 360.6 L623.2 360.5 L624.3 360.5 L625.4 360.5 L626.5 360.6 L627.6 360.7 L628.8 360.8 L629.9 361.0 L631.0 361.2 L632.1 361.4 L633.2 361.7 L634.3 362.0 L635.5 362.3 L636.6 362.6 L637.7 362.9 L638.8 363.2 L639.9 363.6 L641.0 363.9 L642.1 364.3 L643.3 364.6 L644.4 364.4 L645.5 364.1 L646.6 363.7 L647.7 363.4 L648.8 363.0 L649.9 362.7 L651.1 362.4 L652.2 362.1 L653.3 361.8 L654.4 361.5 L655.5 361.3 L656.6 361.1 L657.8 360.9 L658.9 360.7 L660.0 360.6 L661.1 360.5 L662.2 360.5 L663.3 360.5 L664.4 360.6 L665.6 360.7 L666.7 360.8 L667.8 361.0 L668.9 361.3 L670.0 361.6 L671.1 362.0 L672.2 362.4 L673.4 363.0 L674.5 363.5 L675.6 364.2 L676.7 364.9 L677.8 365.7 L678.9 366.6 L680.1 367.6 L681.2 368.6 L682.3 369.7 L683.4 370.9 L684.5 372.1 L685.6 373.5 L686.7 374.9 L687.9 376.3 L689.0 377.9 L690.1 379.5 L691.2 381.1 L692.3 382.9 L693.4 384.7 L694.5 386.5 L695.7 388.4 L696.8 390.3 L697.9 392.3 L699.0 394.3 L700.1 396.4 L701.2 398.5 L702.4 400.6 L703.5 402.7 L704.6 404.8 L705.7 407.0 L706.8 409.1 L707.9 408.7 L709.0 408.2 L710.2 407.8 L711.3 407.4 L712.4 407.0 L713.5 406.6 L714.6 406.1 L715.7 405.7 L716.8 405.4 L718.0 405.0 L719.1 404.6 L720.2 404.2 L721.3 403.9 L722.4 403.5 L723.5 403.2 L724.7 402.9 L725.8 402.6 L726.9 402.3 L728.0 402.1 L729.1 401.8 L730.2 401.6 L731.3 401.4 L732.5 401.2 L733.6 401.0 L734.7 400.9 L735.8 400.8 L736.9 400.7 L738.0 400.6 L739.1 400.6 L740.3 400.5 L741.4 400.5 L742.5 400.6 L743.6 400.6 L744.7 400.7 L745.8 400.8 L747.0 401.0 L748.1 401.1 L749.2 401.3 L750.3 401.6 L751.4 401.8 L752.5 402.1 L753.6 402.5 L754.8 402.8 L755.9 403.2 L757.0 403.6 L758.1 404.1 L759.2 404.6 L760.3 405.1 L761.4 405.7 L762.6 406.3 L763.7 406.9 L764.8 407.6 L765.9 408.3 L767.0 409.0 L768.1 409.8 L769.2 410.6 L770.4 411.5 L771.5 412.3 L772.6 413.3 L773.7 414.2 L774.8 415.2 L775.9 416.2 L777.1 417.2 L778.2 418.3 L779.3 419.4 L780.4 420.5 L781.5 421.6 L782.6 422.8 L783.7 424.0 L784.9 425.2 L786.0 426.4 L787.1 427.6 L788.2 428.9 L789.3 430.1 L790.4 431.4 L791.5 432.6 L792.7 433.9 L793.8 435.1 L794.9 436.4 L796.0 437.6 L797.1 438.8 L798.2 440.0 L799.4 441.1 L800.5 442.3 L801.6 443.4 L802.7 444.5 L803.8 445.5 L804.9 446.5 L806.0 447.4 L807.2 448.3 L808.3 449.1 L809.4 449.9 L810.5 450.5 L811.6 451.2 L812.7 451.7 L813.8 452.2 L815.0 452.6 L816.1 452.9 L817.2 453.1 L818.3 453.3 L819.4 453.3 L820.5 453.3 L821.7 453.1 L822.8 452.9 L823.9 452.6 L825.0 452.1 L826.1 451.6 L827.2 451.0 L828.3 450.3 L829.5 449.5 L830.6 448.6 L831.7 447.6 L832.8 446.6 L833.9 446.0 L835.0 446.3 L836.1 446.5 L837.3 446.7 L838.4 446.9 L839.5 447.1 L840.6 447.3 L841.7 447.5 L842.8 447.7 L844.0 447.9 L845.1 448.1 L846.2 448.3 L847.3 448.4 L848.4 448.6 L849.5 448.7 L850.6 448.9 L851.8 449.0 L852.9 449.1 L854.0 449.2 L855.1 449.3 L856.2 449.4 L857.3 449.5 L858.4 449.6 L859.6 449.7 L860.7 449.7 L861.8 449.8 L862.9 449.8 L864.0 449.8 L865.1 449.9 L866.3 449.9 L867.4 449.9 L868.5 449.9 L869.6 449.9 L870.7 449.8 L871.8 449.8 L872.9 449.7 L874.1 449.7 L875.2 449.6 L876.3 449.5 L877.4 449.4 L878.5 449.3 L879.6 449.2 L880.7 449.1 L881.9 448.9 L883.0 448.7 L884.1 448.5 L885.2 448.3 L886.3 448.1 L887.4 447.8 L888.6 447.5 L889.7 447.2 L890.8 446.9 L891.9 446.6 L893.0 446.2 L894.1 445.8 L895.2 445.3 L896.4 444.9 L897.5 444.4 L898.6 443.8 L899.7 443.3 L900.8 442.7 L901.9 442.0 L903.0 441.3 L904.2 440.6 L905.3 439.8 L906.4 439.0 L907.5 438.1 L908.6 437.2 L909.7 436.3 L910.9 435.3 L912.0 434.2 L913.1 433.1 L914.2 432.0 L915.3 430.8 L916.4 429.5 L917.5 428.2 L918.7 426.9 L919.8 425.5 L920.9 424.0 L922.0 422.5 L923.1 421.0 L924.2 419.4 L925.3 417.8 L926.5 416.1 L927.6 414.4 L928.7 412.7 L929.8 410.9 L930.9 409.1 L932.0 407.3 L933.1 405.4 L934.3 403.6 L935.4 401.7 L936.5 399.8 L937.6 397.9 L938.7 396.0 L939.8 394.0 L941.0 392.1 L942.1 390.3 L943.2 388.4 L944.3 386.5 L945.4 384.7 L946.5 382.9 L947.6 381.2 L948.8 379.5 L949.9 377.8 L951.0 376.2 L952.1 374.7 L953.2 373.2 L954.3 371.7 L955.4 370.4 L956.6 369.1 L957.7 367.9 L958.8 366.8 L959.9 365.8 L961.0 365.8 L962.1 366.0 L963.3 366.2 L964.4 366.5 L965.5 366.7 L966.6 366.9 L967.7 367.1 L968.8 367.3 L969.9 367.5 L971.1 367.7 L972.2 367.9 L973.3 368.1 L974.4 368.3 L975.5 368.5 L976.6 368.7 L977.7 368.8 L978.9 369.0 L980.0 369.2 L981.1 369.3 L982.2 369.5 L983.3 369.6 L984.4 369.7 L985.6 369.9 L986.7 370.0 L987.8 370.0 L988.9 370.1 L990.0 370.2 L991.1 370.2 L992.2 370.3 L993.4 370.3 L994.5 370.3 L995.6 370.3 L996.7 370.2 L997.8 370.2 L998.9 370.1 L1000.0 370.0 L1001.2 369.9 L1002.3 369.8 L1003.4 369.7 L1004.5 369.5 L1005.6 369.3 L1006.7 369.1 L1007.9 368.9 L1009.0 368.7 L1010.1 368.5 L1011.2 368.2 L1012.3 367.9 L1013.4 367.7 L1014.5 367.4 L1015.7 367.1 L1016.8 366.7 L1017.9 366.4 L1019.0 366.1 L1020.1 365.7 L1021.2 365.4 L1022.3 365.0 L1023.5 364.7 L1024.6 364.3 L1025.7 364.0 L1026.8 363.6 L1027.9 363.3 L1029.0 362.9" stroke="#16165e" stroke-width="1" fill="none" shape-rendering="crispEdges"/>
<rect x="366.5" y="353.5" width="15" height="15" fill="none" stroke="#000" stroke-width="1"/>
<path d="M374.5 357.5L377.5 360.5L374.5 363.5L371.5 360.5Z" fill="#999" stroke="#444" stroke-width="0.8"/>
<rect x="904.5" y="353.5" width="15" height="15" fill="none" stroke="#000" stroke-width="1"/>
<path d="M912.5 357.5L915.5 360.5L912.5 363.5L909.5 360.5Z" fill="#999" stroke="#444" stroke-width="0.8"/>
<rect x="616.0" y="358.5" width="4" height="3" fill="#16165e"/>
<rect x="630.5" y="358.5" width="4" height="3" fill="#16165e"/>
<rect x="653.5" y="358.5" width="4" height="3" fill="#16165e"/>
<rect x="667.5" y="358.5" width="4" height="3" fill="#16165e"/>
<rect x="250" y="358.5" width="5" height="3" fill="#16165e"/>
<g font-family="Liberation Sans" font-size="11.3" fill="#000"><text x="227.5" y="590.7" text-anchor="end">-5</text><text x="227.5" y="549.5" text-anchor="end">-4</text><text x="227.5" y="503.1" text-anchor="end">-3</text><text x="227.5" y="456.7" text-anchor="end">-2</text><text x="227.5" y="410.3" text-anchor="end">-1</text><text x="227.5" y="363.9" text-anchor="end">0</text><text x="227.5" y="317.5" text-anchor="end">1</text><text x="227.5" y="271.1" text-anchor="end">2</text><text x="227.5" y="224.7" text-anchor="end">3</text><text x="227.5" y="178.3" text-anchor="end">4</text><text x="227.5" y="136.2" text-anchor="end">5</text><text x="238.3" y="609.8" text-anchor="middle">-30</text><text x="318.9" y="609.8" text-anchor="middle">-24</text><text x="399.5" y="609.8" text-anchor="middle">-18</text><text x="480.1" y="609.8" text-anchor="middle">-12</text><text x="560.7" y="609.8" text-anchor="middle">-6</text></g>
<text x="650.5" y="147" font-family="Liberation Sans" font-weight="bold" font-size="11" fill="#000">Y</text>
<text x="1025" y="351.3" font-family="Liberation Sans" font-weight="bold" font-size="11" fill="#000">X</text>
<g font-family="Liberation Sans" font-weight="bold" font-size="12"><text x="260" y="154" fill="#10105e" textLength="254" lengthAdjust="spacingAndGlyphs">f1(x) = SIN(-1-ABS(COS(X/3))+2*ABS(X/9))+1</text><text x="260" y="174" fill="#0c0ca4" textLength="263" lengthAdjust="spacingAndGlyphs">f2(x) = -(SIN(-1-ABS(COS(X/3))+2*ABS(X/9)))-1</text><text x="260" y="213.6" fill="#000" textLength="199" lengthAdjust="spacingAndGlyphs">Integrationsbereich: -20 &lt;= x &lt;= 20</text></g>
</svg>
<div id="labels"></div>
<!-- right scrollbar -->
<div class="a" style="left:1069px;top:127px;width:16px;height:500px;background:#e6e6e6;border-left:1px solid #c8c8c8"></div>
<div class="a" style="left:1071px;top:145px;width:13px;height:480px;border-radius:6px;background:linear-gradient(90deg,#c4c4c4,#d6d6d6 50%,#c8c8c8)"></div>
<div class="a" style="left:1072px;top:129px;width:11px;height:11px;border-radius:50%;background:radial-gradient(circle at 40% 35%,#b8d0f4,#7ea4e0 70%,#5a7cb8);border:1px solid #6c86b4"></div>
<div class="a" style="left:1072px;top:368px;width:11px;height:15px;border-radius:50%;background:radial-gradient(circle at 40% 35%,#c8dcf8,#86aae0 70%,#5a7cb8);border:1px solid #8aa0c4"></div>
<!-- bottom scrollbar -->
<div class="a" style="left:195px;top:626px;width:874px;height:17px;background:#e6e6e6;border-top:1px solid #c0c0c0"></div>
<div class="a" style="left:211px;top:628px;width:870px;height:14px;border-radius:7px;background:linear-gradient(#c4c4c4,#d6d6d6 50%,#cacaca)"></div>
<div class="a" style="left:197px;top:628px;width:12px;height:12px;border-radius:50%;background:radial-gradient(circle at 40% 35%,#b8d0f4,#7ea4e0 70%,#5a7cb8);border:1px solid #6c86b4"></div>
<!-- status -->
<div class="a" style="left:195px;top:643px;width:889px;height:20px;background:linear-gradient(#c8d8f0,#e4e4e4 30%,#e0e0e0 70%,#bdbdbd)"></div>
<div class="a" style="left:195px;top:645px;width:13px;height:17px;background:linear-gradient(90deg,#a8c4ec,#d0e0f6)"></div>
<div class="a" style="left:205px;top:645px;width:880px;height:17px;border-radius:8px 0 0 8px;background:linear-gradient(#f0f0f0,#dedede 60%,#d0d0d0)"></div>
<div class="a" style="left:211px;top:646px;font-weight:bold;font-size:12.5px;line-height:15px">X: -11.17</div><div class="a" style="left:283px;top:646px;font-weight:bold;font-size:12.5px;line-height:15px">Y: 1.57</div>
<div class="a" style="left:190px;top:662px;width:900px;height:8px;border-radius:0 0 6px 6px;background:linear-gradient(#d0e0f6,#a2c0ec 40%,#7aa2e0 80%,#6a90d0)"></div>
<!-- ================= DIALOG ================= -->
<div class="a" style="left:563px;top:548px;width:526px;height:122px;background:#d8d8d8;border-radius:7px 7px 6px 6px"></div>
<div class="tb" style="left:563px;top:548px;width:526px;height:29px;border-radius:7px 7px 0 0"></div>
<div class="circ" style="left:568px;top:555px;width:15px;height:15px"></div>
<div class="circ" style="left:587px;top:558px;width:9px;height:9px"></div>
<div class="circ" style="left:601px;top:551px;width:9px;height:9px"></div>
<div class="circ" style="left:601px;top:565px;width:9px;height:9px"></div>
<div class="pill" style="left:612px;top:555px;width:477px;height:16px;border-radius:8px 0 0 8px;border-right:none"></div>
<div class="circ" style="left:616px;top:558px;width:10px;height:10px"></div>
<div class="a" style="left:632px;top:555px;font-weight:bold;font-size:11.5px;color:#858585;line-height:14px">Integrale von Funktionen in expliziter Form</div>
<div class="a" style="left:563px;top:577px;width:6px;height:86px;background:linear-gradient(90deg,#a8a8a8 0,#e0e0e0 1px,#d4d4d4 4px,#8c8c8c 5px)"></div>
<div class="a" style="left:1083px;top:577px;width:6px;height:86px;background:linear-gradient(90deg,#8c8c8c 0,#d4d4d4 1px,#e0e0e0 5px,#a8a8a8 6px)"></div>
<div class="a" style="left:569px;top:577px;width:514px;height:85px;background:#e0e0e0;border-top:2px solid #8c8c8c"></div>
<div class="a" style="left:570px;top:579px;width:512px;height:81px;border:1px solid #fff;border-right-color:#a0a0a0;border-bottom-color:#a0a0a0"></div>
<div class="a" style="left:569px;top:658px;width:514px;height:2px;background:#8c8c8c"></div>
<div class="a" style="left:569px;top:660px;width:514px;height:2px;background:#fafafa"></div>
<!-- group boxes (etched) -->
<div class="a" style="left:578px;top:587px;width:265px;height:25px;border:1px solid #fff;border-left-color:#8a8a8a;border-top-color:#8a8a8a"></div>
<div class="a" style="left:578px;top:619px;width:265px;height:33px;border:1px solid #fff;border-left-color:#8a8a8a;border-top-color:#8a8a8a"></div>
<div class="a" style="left:850px;top:587px;width:225px;height:65px;border:1px solid #fff;border-left-color:#8a8a8a;border-top-color:#8a8a8a"></div>
<!-- checkboxes -->
<div class="a" style="left:586px;top:594px;width:13px;height:13px;background:#fff;border:1px solid #fff;border-left-color:#8a8a8a;border-top-color:#8a8a8a;box-shadow:inset 1px 1px 0 #404040,inset -1px -1px 0 #d4d0c8"></div>
<div class="a" style="left:604px;top:593px;font-weight:bold;font-size:11.5px;line-height:14px">Bereich beschriften</div>
<div class="a" style="left:738px;top:594px;width:13px;height:13px;background:#d6d2ce;border:1px solid #fff;border-left-color:#8a8a8a;border-top-color:#8a8a8a;box-shadow:inset 1px 1px 0 #404040,inset -1px -1px 0 #d4d0c8"></div>
<div class="a" style="left:756px;top:593px;font-weight:bold;font-size:11.5px;line-height:14px;color:#8e8e8e">Koordinaten</div>
<div class="a" style="left:586px;top:629px;width:13px;height:13px;background:#fff;border:1px solid #fff;border-left-color:#8a8a8a;border-top-color:#8a8a8a;box-shadow:inset 1px 1px 0 #404040,inset -1px -1px 0 #d4d0c8"></div>
<svg class="a" style="left:588px;top:631px" width="10" height="10" viewBox="0 0 10 10"><path d="M1.5 3.5L3.5 6.5L8 1.2" stroke="#000" stroke-width="2.1" fill="none"/></svg>
<div class="a" style="left:604px;top:628px;font-weight:bold;font-size:11.5px;line-height:14px">Bereichsmarkierung</div>
<div class="a" style="left:738px;top:629px;width:13px;height:13px;background:#fff;border:1px solid #fff;border-left-color:#8a8a8a;border-top-color:#8a8a8a;box-shadow:inset 1px 1px 0 #404040,inset -1px -1px 0 #d4d0c8"></div>
<div class="a" style="left:756px;top:628px;font-weight:bold;font-size:11.8px;line-height:14px">Nur I-Bereich</div>
<!-- buttons -->
<div class="a btn" style="left:862px;top:595px;width:96px;height:20px"></div>
<svg class="a" style="left:881px;top:598px" width="14" height="14" viewBox="0 0 14 14"><path d="M1 1L13 13M13 1L1 13" stroke="#1a1a70" stroke-width="1"/><rect x="5.5" y="5.5" width="3" height="3" fill="#fff" stroke="#000" stroke-width="1"/></svg>
<div class="a" style="left:899px;top:598px;font-weight:bold;font-size:11.7px;line-height:14px">P<u>u</u>nkte</div>
<div class="a btn" style="left:862px;top:625px;width:96px;height:20px"></div>
<svg class="a" style="left:872px;top:628px" width="14" height="14" viewBox="0 0 14 14"><path d="M4.5 3.2A5 5 0 1 0 9.5 3.2" stroke="#10107a" stroke-width="2.2" fill="none"/><path d="M8 0.5L12 3.5L8 5.5Z" fill="#10107a"/></svg>
<div class="a" style="left:889px;top:628px;font-weight:bold;font-size:11.2px;line-height:14px"><u>S</u>imulation</div>
<div class="a btn" style="left:967px;top:609px;width:96px;height:20px"></div>
<svg class="a" style="left:968px;top:609px" width="20" height="20" viewBox="968 609 20 20" shape-rendering="crispEdges">
<path d="M974.5 611.5H983.5L985.5 613.5V626.5H974.5Z" fill="#fff" stroke="#000" stroke-width="1"/>
<path d="M970 613.5H973M971.5 613V621M970 620.5H973M976 615.5H983M977 618.5H983M975 620.5H980M983 611V613M984 613H986" stroke="#000" stroke-width="1"/>
<path d="M976 614L985 623" stroke="#999" stroke-width="1" stroke-dasharray="1,1"/>
<path d="M976.5 624.5L979.5 621.5L982.5 624.5M977 625.5H982" fill="none" stroke="#000" stroke-width="1"/>
<path d="M981 621.5H982M983 622.5H984" stroke="#000" stroke-width="1"/>
</svg>
<div class="a" style="left:992px;top:612px;font-weight:bold;font-size:11.6px;line-height:14px"><u>A</u>usblenden</div>
<div class="a" style="left:563px;top:662px;width:526px;height:8px;border-radius:0 0 6px 6px;background:linear-gradient(#d0e0f6,#a2c0ec 40%,#7aa2e0 80%,#6a90d0)"></div>

<!-- status bar texts -->
<div class="a" style="left:6px;top:688px;width:91px;height:24px;border:1px solid #fff;border-left-color:#9a9a9a;border-top-color:#9a9a9a"></div>
<div class="a" style="left:13px;top:695px;font-size:10.4px;line-height:13px">MATHPROF 5.0</div>
<div class="a" style="left:99px;top:688px;width:1090px;height:24px;border:1px solid #fff;border-left-color:#9a9a9a;border-top-color:#9a9a9a"></div>
<div class="a" style="left:105px;top:695px;font-size:10.8px;line-height:13px">Integrale von Funktionen in expliziter Form</div>
<div class="a" style="left:1191px;top:688px;width:84px;height:24px;border:1px solid #fff;border-left-color:#9a9a9a;border-top-color:#9a9a9a"></div>
<div class="a" style="left:1198px;top:695px;font-size:10.6px;line-height:13px">Professional</div>
</body></html>
